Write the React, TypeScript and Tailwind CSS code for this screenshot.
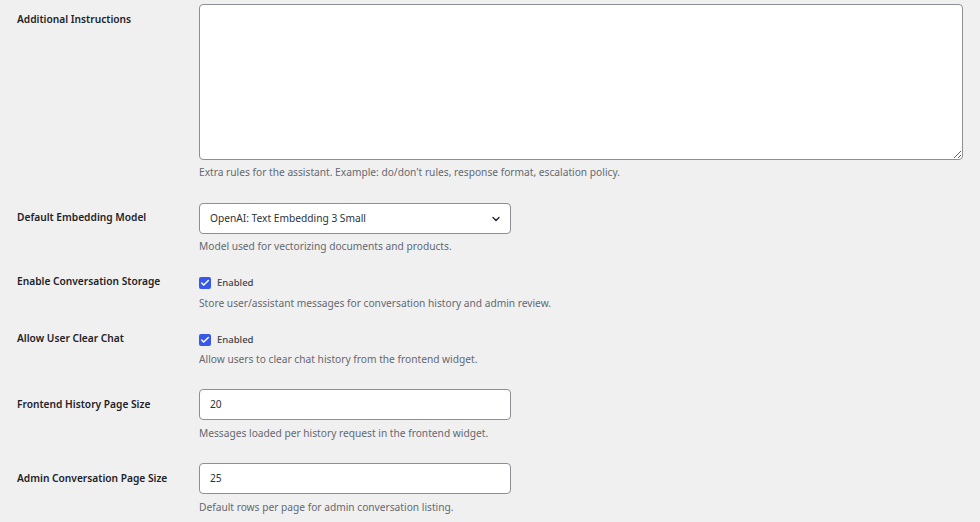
import { ChevronDown, Check } from "lucide-react";

const font = { fontFamily: '"Noto Sans", "Open Sans", sans-serif' };

const Desc = ({ children, className = "" }: { children: string; className?: string }) => (
  <p className={`text-[10.2px] leading-[14px] text-[#646970] ${className}`}>{children}</p>
);

const Label = ({ children, className = "" }: { children: string; className?: string }) => (
  <div className={`w-[199px] shrink-0 pl-[17px] text-[10.2px] leading-[14px] font-semibold text-[#1d2327] ${className}`}>
    {children}
  </div>
);

const CheckRow = () => (
  <label className="flex items-center gap-[6px] h-[14px]">
    <span className="w-[12px] h-[12px] rounded-[2px] bg-[#3858e9] flex items-center justify-center">
      <Check size={10} strokeWidth={3.5} className="text-white" />
    </span>
    <span className="text-[9.5px] font-medium text-[#3c434a] leading-[12px]">Enabled</span>
  </label>
);

const NumberInput = ({ value }: { value: string }) => (
  <div className="w-[312px] h-[31px] bg-white border border-[#8c8f94] rounded-[4px] flex items-center px-[10px] text-[10.2px] text-[#2c3338]">
    {value}
  </div>
);

export default function App() {
  return (
    <div className="w-[980px] h-[522px] bg-[#f0f0f1] overflow-hidden pt-[4px]" style={font}>
      {/* Additional Instructions */}
      <div className="flex">
        <Label className="pt-[8px]">Additional Instructions</Label>
        <div>
          <textarea className="block w-[764px] h-[156px] bg-white border border-[#8c8f94] rounded-[4px] outline-none" />
          <Desc className="mt-[5px]">
            Extra rules for the assistant. Example: do/don't rules, response format, escalation policy.
          </Desc>
        </div>
      </div>

      {/* Default Embedding Model */}
      <div className="flex mt-[24px]">
        <Label className="pt-[7px]">Default Embedding Model</Label>
        <div>
          <div className="w-[312px] h-[31px] bg-white border border-[#8c8f94] rounded-[4px] flex items-center justify-between pl-[10px] pr-[8px] text-[10.2px] text-[#2c3338]">
            <span>OpenAI: Text Embedding 3 Small</span>
            <ChevronDown size={12} strokeWidth={2.75} className="text-[#1d2327]" />
          </div>
          <Desc className="mt-[5px]">Model used for vectorizing documents and products.</Desc>
        </div>
      </div>

      {/* Enable Conversation Storage */}
      <div className="flex mt-[23px]">
        <Label className="-mt-[2px]">Enable Conversation Storage</Label>
        <div>
          <CheckRow />
          <Desc className="mt-[6px]">Store user/assistant messages for conversation history and admin review.</Desc>
        </div>
      </div>

      {/* Allow User Clear Chat */}
      <div className="flex mt-[23px]">
        <Label className="-mt-[2px]">Allow User Clear Chat</Label>
        <div>
          <CheckRow />
          <Desc className="mt-[5px]">Allow users to clear chat history from the frontend widget.</Desc>
        </div>
      </div>

      {/* Frontend History Page Size */}
      <div className="flex mt-[23px]">
        <Label className="pt-[8px]">Frontend History Page Size</Label>
        <div>
          <NumberInput value="20" />
          <Desc className="mt-[6px]">Messages loaded per history request in the frontend widget.</Desc>
        </div>
      </div>

      {/* Admin Conversation Page Size */}
      <div className="flex mt-[23px]">
        <Label className="pt-[8px]">Admin Conversation Page Size</Label>
        <div>
          <NumberInput value="25" />
          <Desc className="mt-[6px]">Default rows per page for admin conversation listing.</Desc>
        </div>
      </div>
    </div>
  );
}
